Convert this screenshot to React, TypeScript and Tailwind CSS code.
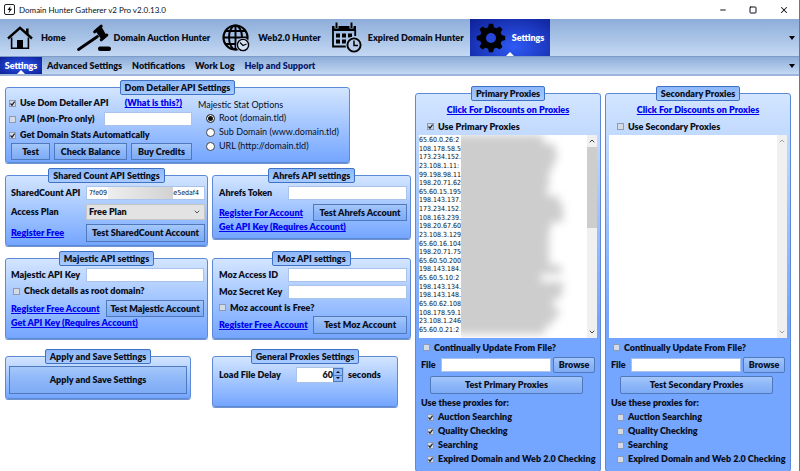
import { ReactNode } from "react";
import clsx from "clsx";
import { ChevronDown, ChevronUp, Minus, Square, X } from "lucide-react";

const HomeIcon = () => (
  <svg viewBox="0 0 26 24" className="h-6 w-[26px] shrink-0">
    <path
      d="M1 12.5 13 1.8l12 10.7"
      fill="none"
      stroke="#000"
      strokeWidth="2.4"
    />
    <path d="M19 2.5h2.6v6L19 6z" />
    <path
      d="M4.6 11.5v10.7h16.8V11.5"
      fill="none"
      stroke="#000"
      strokeWidth="1.6"
    />
    <path d="M10 14h6v8h-6z" />
  </svg>
);

const GavelIcon = () => (
  <svg viewBox="0 0 36 30" className="h-[30px] w-9 shrink-0">
    <path d="m2.500 26.500 19-13" stroke="#000" strokeWidth="2.800" strokeLinecap="round" />
    <path d="m18.800 7 6-4.500 5.400 9.500-5.200 4z" />
    <path
      d="m18.600 8.800 6.600-5.600M25.200 16.800l5.600-4.800"
      stroke="#000"
      strokeWidth="3"
      strokeLinecap="round"
    />
    <rect x="22" y="23.500" width="13" height="4.600" rx="2" />
  </svg>
);

const GlobeIcon = () => (
  <svg viewBox="0 0 28 28" className="size-7 shrink-0">
    <g fill="none" stroke="#000" strokeWidth="1.9">
      <circle cx="13.5" cy="13.5" r="12" strokeWidth="2.2" />
      <ellipse cx="13.5" cy="13.5" rx="6.5" ry="12" />
      <path d="M13.5 1.5v24M1.5 13.5h24M3.5 7h20M3.5 20h20" />
    </g>
    <circle cx="21" cy="21" r="7" fill="#b6cbea" />
    <circle
      cx="21"
      cy="21"
      r="5.6"
      fill="#d3e1f6"
      stroke="#000"
      strokeWidth="1.4"
    />
    <path
      d="m18 18.5 3 3 3.5-1.5"
      fill="none"
      stroke="#000"
      strokeWidth="1.2"
    />
  </svg>
);

const CalendarIcon = () => (
  <svg viewBox="0 0 31 31" className="size-[31px] shrink-0">
    <path d="M1 4h24v5H1z" />
    <path
      d="M2 8v16.5h14M24.2 8v6"
      fill="none"
      stroke="#000"
      strokeWidth="1.8"
    />
    <path d="M5.5.5v6M20.5.5v6" stroke="#a3bce2" strokeWidth="4" />
    <path d="M5.5.5V6M20.5.5V6" stroke="#000" strokeWidth="2" />
    <path d="M5 11.5h4v4H5zM11 11.5h4v4h-4zM17 11.5h4v4h-4zM5 17.5h4v4H5zM11 17.5h4v4h-4z" />
    <circle cx="23" cy="23" r="8.5" fill="#b9cdeb" />
    <circle
      cx="23"
      cy="23"
      r="6.6"
      fill="none"
      stroke="#000"
      strokeWidth="1.9"
    />
    <path d="M23 18.5v5h4" fill="none" stroke="#000" strokeWidth="1.5" />
  </svg>
);

const GearIcon = () => (
  <svg viewBox="0 0 30 30" className="size-[30px] shrink-0">
    {[0, 45, 90, 135].map((angle) => (
      <path
        key={angle}
        d="M11.5 6 13 .8h4L18.5 6v18L17 29.2h-4L11.5 24z"
        transform={`rotate(${angle} 15 15)`}
      />
    ))}
    <circle cx="15" cy="15" r="11" />
    <circle cx="15" cy="15" r="5" fill="#2546d8" />
  </svg>
);

const Caret = () => (
  <svg viewBox="0 0 6 4" className="h-1 w-1.5">
    <path d="M0 0h6L3 4z" />
  </svg>
);

const Notch = () => (
  <svg
    viewBox="0 0 8 4"
    className="absolute bottom-0 left-1/2 h-1 w-2 -translate-x-1/2"
  >
    <path d="M0 4 4 0l4 4z" fill="#fff" />
  </svg>
);

interface GroupProps {
  title: string;
  className?: string;
  children: ReactNode;
}

const Group = ({ title, className, children }: GroupProps) => (
  <fieldset
    className={clsx(
      "min-w-0 rounded-[3px] border border-[#5c8ad6] bg-linear-to-b from-[#d3e5ff] to-[#74a5ff] shadow-[0_1px_0_#6f93cf]",
      className
    )}
  >
    <legend className="mx-auto h-[15px] rounded-[2px] border border-[#3f72c4] bg-linear-to-b from-[#8db8fb] to-[#a9cbff] px-1 leading-[13px]">
      {title}
    </legend>
    {children}
  </fieldset>
);

interface ButtonProps {
  className?: string;
  children: ReactNode;
}

const Button = ({ className, children }: ButtonProps) => (
  <button
    type="button"
    className={clsx(
      "shrink-0 border border-[#5079bb] bg-linear-to-b from-[#a5c8fb] via-[#8fb8f8] via-45% to-[#7dabf6] whitespace-nowrap",
      className
    )}
  >
    {children}
  </button>
);

interface CheckProps {
  label: string;
  checked?: boolean;
  className?: string;
}

const Check = ({ label, checked, className }: CheckProps) => (
  <label className={clsx("flex items-center gap-1 whitespace-nowrap", className)}>
    <span className="relative flex size-[7px] shrink-0">
      <input
        type="checkbox"
        defaultChecked={checked}
        className="peer size-[7px] appearance-none border border-[#8f9bb0] bg-[#d5dbe6]"
      />
      <svg
        viewBox="0 0 7 7"
        className="pointer-events-none absolute inset-0 hidden peer-checked:block"
      >
        <path
          d="M1.5 3.5 3 5.2l2.6-3.6"
          fill="none"
          stroke="#1c2430"
          strokeWidth="1.2"
        />
      </svg>
    </span>
    {label}
  </label>
);

interface TextBoxProps {
  id: string;
  label?: string;
  className?: string;
}

const TextBox = ({ id, label, className }: TextBoxProps) => (
  <input
    id={id}
    type="text"
    aria-label={label}
    className={clsx(
      "h-[14px] min-w-0 border border-[#a9c3ea] bg-white px-0.5 outline-none",
      className
    )}
  />
);

const Link = ({ children, className }: ButtonProps) => (
  <a
    href="#"
    className={clsx("whitespace-nowrap text-[#0000f0] underline", className)}
  >
    {children}
  </a>
);

const tools = [
  { label: "Home", icon: <HomeIcon />, style: "gap-2 pl-[7px]" },
  { label: "Domain Auction Hunter", icon: <GavelIcon />, style: "gap-0.5 pl-2.5" },
  { label: "Web2.0 Hunter", icon: <GlobeIcon />, style: "gap-2 pl-3" },
  { label: "Expired Domain Hunter", icon: <CalendarIcon />, style: "gap-1.5 pl-2.5" },
];

const tabs = ["Advanced Settings", "Notifications", "Work Log", "Help and Support"];

const statOptions = [
  "Root (domain.tld)",
  "Sub Domain (www.domain.tld)",
  "URL (http://domain.tld)",
];

// visible start of each address, and the width of the blurred rest
const proxies = [
  { ip: "65.60.0.26:2", blur: 82 },
  { ip: "108.178.58.5", blur: 94 },
  { ip: "173.234.152.", blur: 96 },
  { ip: "23.108.1.11:", blur: 92 },
  { ip: "99.198.98.11", blur: 88 },
  { ip: "198.20.71.62", blur: 88 },
  { ip: "65.60.15.195", blur: 86 },
  { ip: "198.143.137.", blur: 98 },
  { ip: "173.234.152.", blur: 102 },
  { ip: "108.163.239.", blur: 102 },
  { ip: "198.20.67.60", blur: 90 },
  { ip: "23.108.3.129", blur: 88 },
  { ip: "65.60.16.104", blur: 88 },
  { ip: "198.20.71.75", blur: 88 },
  { ip: "65.60.50.200", blur: 88 },
  { ip: "198.143.184.", blur: 100 },
  { ip: "65.60.5.10:2", blur: 80 },
  { ip: "198.143.134.", blur: 102 },
  { ip: "198.143.148.", blur: 100 },
  { ip: "65.60.62.108", blur: 92 },
  { ip: "108.178.59.1", blur: 98 },
  { ip: "23.108.1.246", blur: 92 },
  { ip: "65.60.0.21:2", blur: 84 },
];

const uses = [
  "Auction Searching",
  "Quality Checking",
  "Searching",
  "Expired Domain and Web 2.0 Checking",
];

const ProxyList = ({ filled }: { filled: boolean }) => (
  <div className="mx-[3px] flex h-[203px] bg-white">
    <div className="relative min-w-0 flex-1">
      {filled && (
        <>
          <ul className="flex h-full flex-col justify-between pt-px pb-1 font-['DejaVu_Sans_Condensed','Roboto',sans-serif] text-[7px] font-normal text-[#111]">
            {proxies.map(({ ip }, i) => (
              <li key={i} className="h-2 leading-2 whitespace-nowrap">
                {ip}
              </li>
            ))}
          </ul>
          <div className="absolute inset-y-0 right-0 left-[42px] overflow-hidden">
            <div className="-ml-2 flex h-full flex-col pb-1 blur-[4px]">
              {proxies.map(({ blur }, i) => (
                <span
                  key={i}
                  className="flex-1 bg-[#cdcdcd]"
                  style={{ width: blur + 8 }}
                />
              ))}
            </div>
          </div>
        </>
      )}
    </div>
    <div
      className={clsx(
        "flex w-2.5 flex-col items-center bg-[#f0f0f0]",
        filled ? "text-[#404040]" : "text-[#a0a0a0]"
      )}
    >
      <ChevronUp className="h-3 w-2" strokeWidth={3} />
      <div className={clsx("w-full flex-1", filled && "pb-[98px]")}>
        {filled && <div className="h-full bg-[#cdcdcd]" />}
      </div>
      <ChevronDown className="h-3 w-2" strokeWidth={3} />
    </div>
  </div>
);

const ProxyGroup = ({ name, enabled }: { name: string; enabled: boolean }) => (
  <Group title={`${name} Proxies`} className="to-60%">
    <div className="flex h-[17px] items-center justify-center">
      <Link>Click For Discounts on Proxies</Link>
    </div>
    <Check
      label={`Use ${name} Proxies`}
      checked={enabled}
      className="h-[17px] pl-[11px]"
    />
    <ProxyList filled={enabled} />
    <Check label="Continually Update From File?" className="h-[19px] pl-[7px]" />
    <div className="flex items-center gap-0.5 pr-[5px] pl-[5px]">
      <label htmlFor={`${name}-file`} className="w-[18px]">
        File
      </label>
      <TextBox id={`${name}-file`} className="flex-1" />
      <Button className="h-4 w-[42px] rounded-[2px]">Browse</Button>
    </div>
    <Button className="mt-[3px] mr-[17px] ml-3.5 h-[18px] w-[calc(100%-31px)] rounded-[2px]">
      {`Test ${name} Proxies`}
    </Button>
    <p className="mt-0.5 h-[14px] pl-[5px] leading-[14px]">Use these proxies for:</p>
    <div className="flex flex-col pb-[5px] pl-[11px]">
      {uses.map((use) => (
        <Check key={use} label={use} checked={enabled} className="h-[14px]" />
      ))}
    </div>
  </Group>
);

const App = () => {
  return (
    <div className="flex min-h-screen flex-col border-r border-[#3b83bd] bg-white font-['Lato',sans-serif] text-[9px] leading-3 font-extrabold text-[#0a0f1c]">
      <header className="flex h-[19px] items-center bg-white pr-2.5 pl-1 font-normal">
        <svg viewBox="0 0 11 11" className="size-[11px]">
          <rect x=".5" y=".5" width="10" height="10" rx="1.5" fill="#fff" stroke="#222" />
          <path d="m6.5 2-3 4h2l-1 3.5L8 4.800H6z" />
        </svg>
        <h1 className="ml-1 flex-1 text-[8px]">Domain Hunter Gatherer v2 Pro v2.0.13.0</h1>
        <div className="flex items-center gap-[22px]">
          <button type="button" aria-label="Minimize">
            <Minus className="size-2" strokeWidth={3} />
          </button>
          <button type="button" aria-label="Maximize">
            <Square className="size-2" strokeWidth={3} />
          </button>
          <button type="button" aria-label="Close">
            <X className="size-2.5" strokeWidth={2.5} />
          </button>
        </div>
      </header>

      <nav className="flex h-[38px] items-stretch border-b border-[#7f9cc8] bg-linear-to-b from-[#8dadd9] to-[#c4d8f3]">
        {tools.map(({ label, icon, style }) => (
          <button
            key={label}
            type="button"
            className={clsx("flex items-center whitespace-nowrap", style)}
          >
            {icon}
            {label}
          </button>
        ))}
        <button
          type="button"
          className="relative ml-1.5 flex w-20 items-center gap-1.5 bg-radial-[at_55%_75%] from-[#2f5af5] to-[#0d1f95] pl-1.5 text-white"
        >
          <GearIcon />
          Settings
          <Notch />
        </button>
        <button type="button" aria-label="More tools" className="mr-1 ml-auto">
          <Caret />
        </button>
      </nav>

      <nav className="flex h-[19px] items-stretch border-b-2 border-[#9db5da] bg-linear-to-b from-[#8dadd9] to-[#c4d8f3]">
        <button
          type="button"
          className="relative w-[42px] bg-radial from-[#2f5af5] to-[#0d1f95] text-white"
        >
          Settings
          <Notch />
        </button>
        <div className="flex gap-2.5 pl-[5px]">
          {tabs.map((tab) => (
            <button key={tab} type="button" className="whitespace-nowrap last:text-[#0b1a6b]">
              {tab}
            </button>
          ))}
        </div>
        <button type="button" aria-label="More tabs" className="mr-1 ml-auto">
          <Caret />
        </button>
      </nav>

      <main className="flex items-start gap-1 pt-1 pr-2 pl-[5px]">
        <div className="grid min-w-0 flex-[406] grid-cols-[203fr_199fr] items-start gap-x-1">
          <Group title="Dom Detailer API Settings" className="col-span-2 mr-[61px] h-[83px]">
            <div className="flex gap-1.5 pl-[3px]">
              <div className="w-[183px]">
                <div className="flex h-4 items-center justify-between pr-2.5">
                  <Check label="Use Dom Detailer API" checked />
                  <Link>(What is this?)</Link>
                </div>
                <div className="flex h-4 items-center justify-between">
                  <Check label="API (non-Pro only)" />
                  <TextBox id="dom-key" label="Dom Detailer API key" className="w-[88px]" />
                </div>
                <Check label="Get Domain Stats Automatically" checked className="h-4" />
                <div className="flex justify-between pl-0.5">
                  <Button className="h-[17px] w-[39px]">Test</Button>
                  <Button className="h-[17px] w-[73px]">Check Balance</Button>
                  <Button className="h-[17px] w-[61px]">Buy Credits</Button>
                </div>
              </div>
              <div className="pt-1 font-normal">
                <p>Majestic Stat Options</p>
                {statOptions.map((option, i) => (
                  <label
                    key={option}
                    className="flex h-[14px] items-center gap-1 pl-2 whitespace-nowrap"
                  >
                    <input
                      type="radio"
                      name="majestic-stat"
                      defaultChecked={i === 0}
                      className="size-[9px] appearance-none rounded-full border border-[#444] bg-white checked:bg-[#111] checked:shadow-[inset_0_0_0_1px_#fff]"
                    />
                    {option}
                  </label>
                ))}
              </div>
            </div>
          </Group>

          <Group title="Shared Count API Settings" className="mt-[5px] h-[78px]">
            <div className="grid grid-cols-[75px_1fr] items-center gap-y-1 pt-[3px] pr-0.5 pl-[5px] whitespace-nowrap">
              <label htmlFor="shared-key">SharedCount API</label>
              <div className="relative flex">
                <input
                  id="shared-key"
                  defaultValue={"7fe09\u2003\u2003\u2003\u2003\u2003\u2003\u2003\u2003\u2003\u2003\u2002e5edaf4"}
                  className="h-[14px] w-full min-w-0 border border-[#a9c3ea] bg-white px-0.5 font-['DejaVu_Sans_Condensed','Roboto',sans-serif] text-[7px] font-normal outline-none"
                />
                <span className="absolute inset-y-px right-8 left-[22px] bg-linear-to-r from-[#eee] to-[#d2d2d2]" />
              </div>
              <label htmlFor="plan">Access Plan</label>
              <div className="relative flex">
                <select
                  id="plan"
                  className="h-4 w-full appearance-none border border-[#c5c5c5] bg-[#e3e3e3] px-0.5 outline-none"
                >
                  <option>Free Plan</option>
                </select>
                <ChevronDown className="pointer-events-none absolute top-1 right-1 size-2" />
              </div>
              <Link className="justify-self-start">Register Free</Link>
              <Button className="h-[18px]">Test SharedCount Account</Button>
            </div>
          </Group>

          <Group title="Ahrefs API settings" className="mt-[5px] h-[71px]">
            <div className="pt-[3px] pr-[3px] pl-1.5">
              <div className="flex items-center">
                <label htmlFor="ahrefs-token" className="w-[69px]">
                  Ahrefs Token
                </label>
                <TextBox id="ahrefs-token" className="flex-1" />
              </div>
              <div className="mt-1 flex items-center justify-between">
                <Link>Register For Account</Link>
                <Button className="h-[17px] w-[94px]">Test Ahrefs Account</Button>
              </div>
              <Link>Get API Key (Requires Account)</Link>
            </div>
          </Group>

          <Group title="Majestic API settings" className="mt-[5px] h-[88px]">
            <div className="pt-0.5 pr-[3px] pl-[5px]">
              <div className="flex items-center">
                <label htmlFor="majestic-key" className="w-[75px]">
                  Majestic API Key
                </label>
                <TextBox id="majestic-key" className="flex-1" />
              </div>
              <Check label="Check details as root domain?" className="h-[18px] pl-0.5" />
              <div className="flex items-center justify-between">
                <Link>Register Free Account</Link>
                <Button className="h-[17px] w-[98px]">Test Majestic Account</Button>
              </div>
              <Link>Get API Key (Requires Account)</Link>
            </div>
          </Group>

          <Group title="Moz API settings" className="mt-[5px] h-[88px]">
            <div className="pt-0.5 pr-[3px] pl-1.5">
              <div className="flex items-center">
                <label htmlFor="moz-id" className="w-[69px]">
                  Moz Access ID
                </label>
                <TextBox id="moz-id" className="flex-1" />
              </div>
              <div className="mt-[3px] flex items-center">
                <label htmlFor="moz-key" className="w-[69px]">
                  Moz Secret Key
                </label>
                <TextBox id="moz-key" className="flex-1" />
              </div>
              <Check label="Moz account is Free?" className="h-[17px]" />
              <div className="flex items-center justify-between">
                <Link>Register Free Account</Link>
                <Button className="h-[18px] w-[94px]">Test Moz Account</Button>
              </div>
            </div>
          </Group>

          <Group title="Apply and Save Settings" className="mt-2.5 mr-[17px] h-[50px]">
            <Button className="mx-[3px] mt-0.5 h-7 w-[calc(100%-6px)]">
              Apply and Save Settings
            </Button>
          </Group>

          <Group title="General Proxies Settings" className="mt-2.5 mr-[13px] h-[58px]">
            <div className="flex items-center pt-[3px] pl-1.5">
              <label htmlFor="delay" className="w-[77px]">
                Load File Delay
              </label>
              <div className="flex h-4 w-12 border border-[#a9c3ea] bg-white">
                <input
                  id="delay"
                  defaultValue="60"
                  className="min-w-0 flex-1 text-right outline-none"
                />
                <div className="flex w-2.5 flex-col border border-[#5079bb] bg-[#8fb8f8]">
                  <button
                    type="button"
                    aria-label="Increase"
                    className="flex flex-1 items-center justify-center border-b border-[#5079bb]"
                  >
                    <svg viewBox="0 0 4 2" className="h-0.5 w-1">
                      <path d="M0 2h4L2 0z" />
                    </svg>
                  </button>
                  <button
                    type="button"
                    aria-label="Decrease"
                    className="flex flex-1 items-center justify-center"
                  >
                    <svg viewBox="0 0 4 2" className="h-0.5 w-1">
                      <path d="M0 0h4L2 2z" />
                    </svg>
                  </button>
                </div>
              </div>
              <span className="pl-1">seconds</span>
            </div>
          </Group>
        </div>

        <div className="grid min-w-0 flex-[376] grid-cols-2 gap-1 pt-1.5">
          <ProxyGroup name="Primary" enabled />
          <ProxyGroup name="Secondary" enabled={false} />
        </div>
      </main>
    </div>
  );
};

export default App;
